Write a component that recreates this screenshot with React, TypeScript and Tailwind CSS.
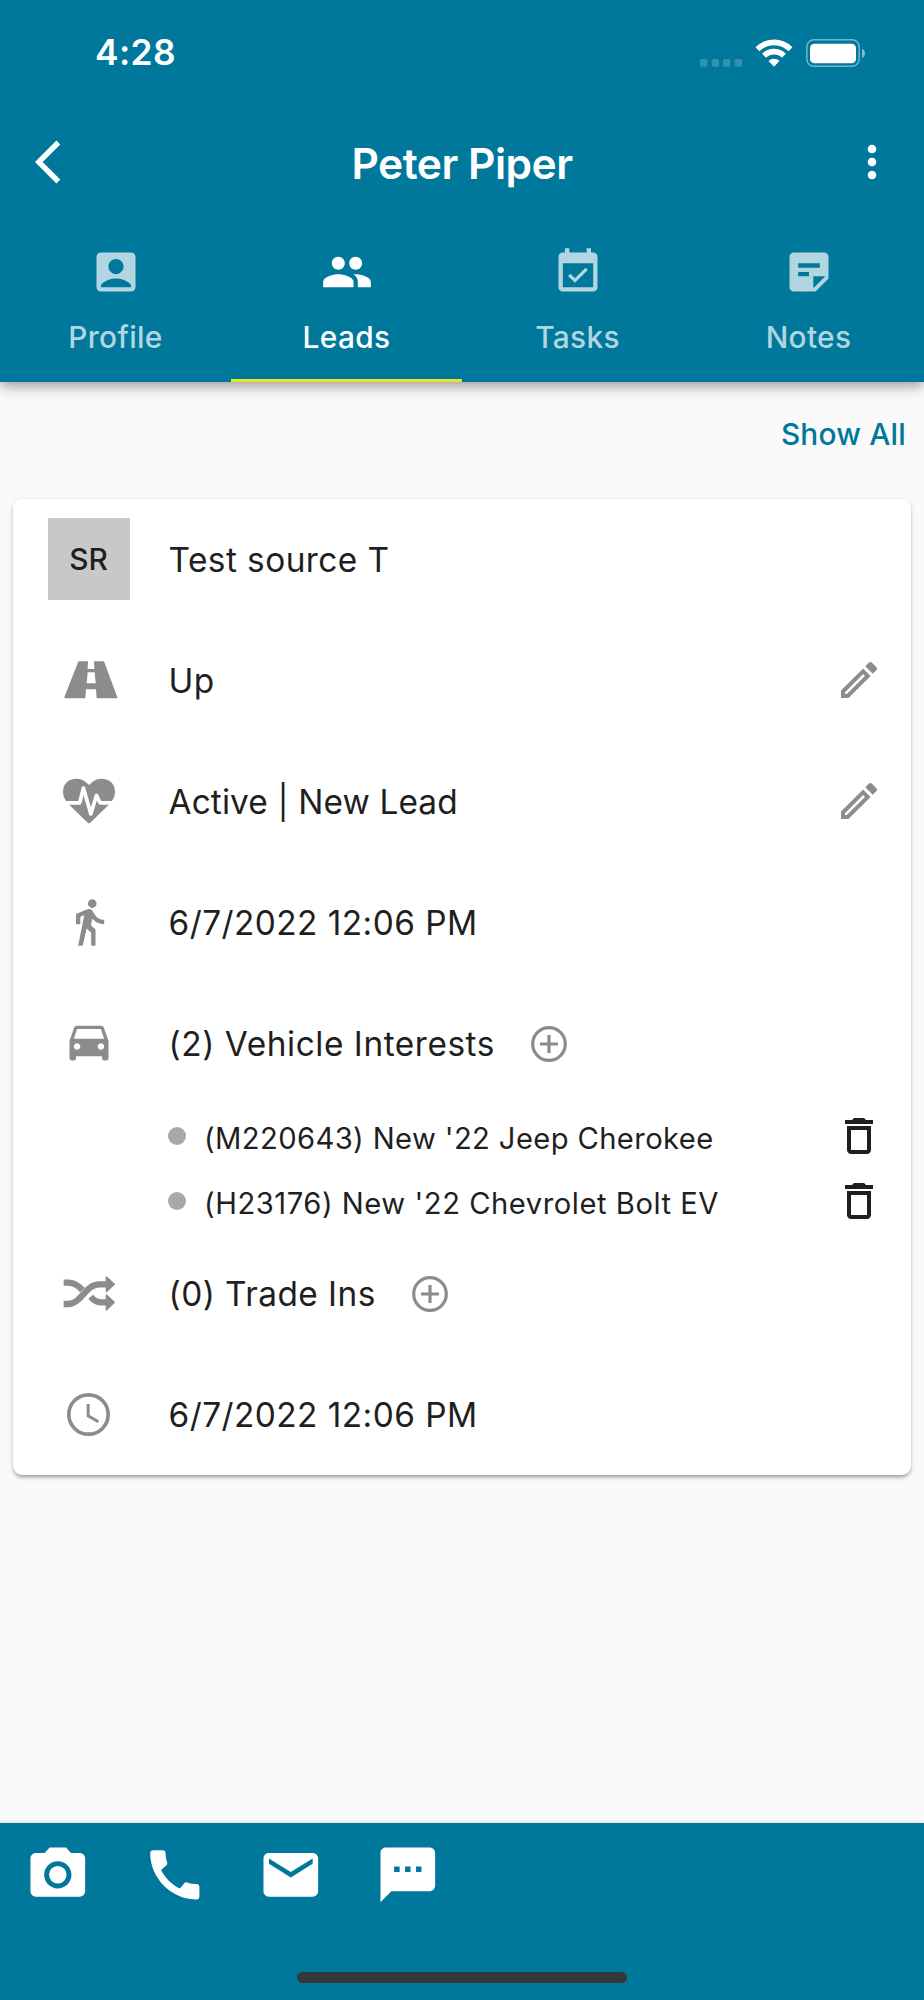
import type { ReactNode } from "react";
import {
  MdAccountBox,
  MdArrowBackIos,
  MdCall,
  MdCameraAlt,
  MdDeleteOutline,
  MdDirectionsCar,
  MdDirectionsWalk,
  MdEventAvailable,
  MdMail,
  MdMoreVert,
  MdOutlineEdit,
  MdPeople,
  MdSms,
  MdStickyNote2,
} from "react-icons/md";

const tabs = [
  { label: "Profile", icon: MdAccountBox },
  { label: "Leads", icon: MdPeople },
  { label: "Tasks", icon: MdEventAvailable },
  { label: "Notes", icon: MdStickyNote2 },
];

const vehicles = [
  { name: "(M220643) New '22 Jeep Cherokee", tracking: "tracking-[0.38px]" },
  { name: "(H23176) New '22 Chevrolet Bolt EV", tracking: "tracking-[0.53px]" },
];

const actions = [MdCameraAlt, MdCall, MdMail, MdSms];

function StatusIcons() {
  return (
    <svg width="165" height="28" viewBox="180 24 495 84" fill="none">
      <g fill="#fff" opacity="0.2">
        <rect x="180" y="84" width="22" height="23" rx="6" />
        <rect x="215" y="84" width="22" height="23" rx="6" />
        <rect x="249" y="84" width="22" height="23" rx="6" />
        <rect x="284" y="84" width="22" height="23" rx="6" />
      </g>
      <g stroke="#fff" strokeWidth="17">
        <path d="M352.5 54.5a70 70 0 0 1 99 0" />
        <path d="M372.3 74.3a42 42 0 0 1 59.4 0" />
      </g>
      <path d="M385.5 90a23 23 0 0 1 33 0L402 107z" fill="#fff" />
      <rect x="500.5" y="26" width="157" height="80" rx="22" stroke="#fff" strokeWidth="4.5" opacity="0.45" />
      <rect x="510" y="38" width="138" height="59" rx="13" fill="#fff" />
      <path d="M666 53q9 4 9 14t-9 14z" fill="#fff" opacity="0.5" />
    </svg>
  );
}

function RoadIcon() {
  return (
    <svg width="54" height="38" viewBox="23 17 162 114" fill="currentColor">
      <path d="M69 18H95L94 41H114L113 18H140Q143 18 144 21L183 126Q184 129 181 129H121L119 102H89L87 129H27Q23 129 24 126L65 21Q66 18 69 18zM94 51L91 84H118L115 51z" fillRule="evenodd" />
    </svg>
  );
}

function HeartbeatIcon() {
  return (
    <svg width="52" height="52" viewBox="0 0 1792 1792" fill="currentColor">
      <path d="M1280 1024h305q-5 6-10 10.5t-9 7.5l-3 4-623 600q-18 18-44 18t-44-18l-624-602q-5-2-21-20h369q22 0 39.5-13.5t22.5-34.5l70-281 190 667q6 20 23 33t39 13q21 0 38-13t23-33l146-485 56 112q18 35 57 35zm512-428q0 145-103 300h-369l-111-221q-8-17-25.5-27t-36.5-8q-45 5-56 46l-129 430-196-686q-6-20-23.5-33t-39.5-13-39 13.5-22 34.5l-116 464h-423q-103-155-103-300 0-220 127-344t351-124q62 0 126.5 21.5t120 58 95.5 68.5 76 68q36-36 76-68t95.5-68.5 120-58 126.5-21.5q224 0 351 124t127 344z" />
    </svg>
  );
}

function ShuffleIcon() {
  return (
    <svg width="52" height="35" viewBox="20 25 156 105" fill="none" stroke="currentColor" strokeWidth="19">
      <path d="M22 109H36C74 109 88 50 128 50H152" />
      <path d="M22 45H36C54 45 66 54 78 67" />
      <path d="M103 87C113 99 122 104 136 104H152" />
      <path d="M150 28L174 50L150 72zM150 82L174 104L150 127z" fill="currentColor" strokeWidth="4" strokeLinejoin="round" />
    </svg>
  );
}

function ClockIcon() {
  return (
    <svg width="43" height="43" viewBox="0 0 130 130" fill="none" stroke="currentColor">
      <circle cx="65" cy="65" r="59.5" strokeWidth="11" />
      <path d="M64 33V69L95 87" strokeWidth="9" />
    </svg>
  );
}

function AddButton() {
  return (
    <button className="ml-[36px] text-[#8c8c8c]">
      <svg width="36" height="36" viewBox="0 0 36 36" fill="none" stroke="currentColor" strokeWidth="3.2">
        <circle cx="18" cy="18" r="16.3" />
        <path d="M18 9v18M9 18h18" />
      </svg>
    </button>
  );
}

function Row({ icon, action, children }: { icon: ReactNode; action?: ReactNode; children: ReactNode }) {
  return (
    <div className="flex h-[120.9px] items-center pr-7 pl-[34.5px]">
      <div className="flex w-[82px] shrink-0 justify-center text-[#8c8c8c]">{icon}</div>
      <div className="ml-[39px] flex flex-1 items-center pt-0.5 text-[33.4px] tracking-[0.45px]">{children}</div>
      {action}
    </div>
  );
}

function EditButton() {
  return (
    <button className="text-[48px] text-[#8c8c8c]">
      <MdOutlineEdit />
    </button>
  );
}

export default function App() {
  return (
    <div className="flex h-[2000px] w-[924px] flex-col overflow-hidden bg-[#fafafa] font-[Inter,sans-serif] text-[#1f1f1f]">
      <header className="flex h-[382px] shrink-0 flex-col bg-[#00789b] text-white shadow-[0_4px_9px_-2px_rgba(0,0,0,0.22),0_8px_11px_0_rgba(0,0,0,0.12),0_2px_20px_0_rgba(0,0,0,0.1)]">
        <div className="flex h-[105px] items-center justify-between pr-[59px] pl-[95px]">
          <span className="pt-0.5 text-[35.3px] font-semibold tracking-[0.4px]">4:28</span>
          <StatusIcons />
        </div>

        <div className="flex h-[114px] items-center justify-between pr-[26px] pl-[35px]">
          <button className="w-[52px] text-[52px]">
            <MdArrowBackIos />
          </button>
          <h1 className="pt-[3px] pr-[9px] text-[42.5px] font-semibold tracking-[-0.5px]">Peter Piper</h1>
          <button className="text-[52px]">
            <MdMoreVert />
          </button>
        </div>

        <nav className="grid flex-1 grid-cols-4">
          {tabs.map(({ label, icon: Icon }) => {
            const active = label === "Leads";
            return (
              <button key={label} className={`flex flex-col items-center pt-[26.5px] ${active ? "" : "text-[#b2d6e1]"}`}>
                <Icon size={52} />
                <span className="mt-[21.5px] text-[29.8px] leading-9 font-medium tracking-[0.35px]">{label}</span>
                {active && <span className="mt-auto h-[3px] w-full bg-[#e9e12b]" />}
              </button>
            );
          })}
        </nav>
      </header>

      <main className="flex-1">
        <div className="flex h-[117px] justify-end pt-[30px] pr-[18px]">
          <button className="h-11 text-[29.8px] font-medium tracking-[0.2px] text-[#00789b]">Show All</button>
        </div>

        <section className="mx-[13px] rounded-[9px] bg-white shadow-[0_4px_4px_-2px_rgba(0,0,0,0.2),0_2px_3px_0_rgba(0,0,0,0.14),0_2px_6px_0_rgba(0,0,0,0.1)]">
          <Row
            icon={
              <div className="flex size-[82px] items-center justify-center bg-[#c8c8c8] text-[29.8px] font-medium text-[#1f1f1f]">
                SR
              </div>
            }
          >
            Test source T
          </Row>
          <Row icon={<div className="pl-1"><RoadIcon /></div>} action={<EditButton />}>
            Up
          </Row>
          <Row icon={<HeartbeatIcon />} action={<EditButton />}>
            <span className="tracking-[0.12px]">Active | New Lead</span>
          </Row>
          <Row icon={<MdDirectionsWalk size={52} />}>6/7/2022 12:06 PM</Row>
          <Row icon={<MdDirectionsCar size={52} className="mb-1" />}>
            <span className="tracking-[0.55px]">(2) Vehicle Interests</span>
            <AddButton />
          </Row>

          <ul>
            {vehicles.map(({ name, tracking }) => (
              <li key={name} className="flex h-[64.8px] items-center pr-7 pl-[155px]">
                <span className="size-[18px] rounded-full bg-[#a8a8a8]" />
                <span className={`ml-[18px] flex-1 pt-1.5 text-[29.2px] ${tracking}`}>{name}</span>
                <button className="text-[48px]">
                  <MdDeleteOutline />
                </button>
              </li>
            ))}
          </ul>

          <Row icon={<ShuffleIcon />}>
            (0) Trade Ins
            <AddButton />
          </Row>
          <Row icon={<ClockIcon />}>6/7/2022 12:06 PM</Row>
        </section>
      </main>

      <footer className="flex h-[177px] shrink-0 flex-col items-center justify-between bg-[#00789b] pt-[19px] pb-[17px] text-white shadow-[0_-1px_3px_rgba(0,0,0,0.12)]">
        <div className="flex gap-[51px] self-start pl-[25px]">
          {actions.map((Icon, i) => (
            <button key={i} className="text-[65.6px]">
              <Icon />
            </button>
          ))}
        </div>
        <div className="h-[11px] w-[330px] rounded-full bg-[#363636]" />
      </footer>
    </div>
  );
}
